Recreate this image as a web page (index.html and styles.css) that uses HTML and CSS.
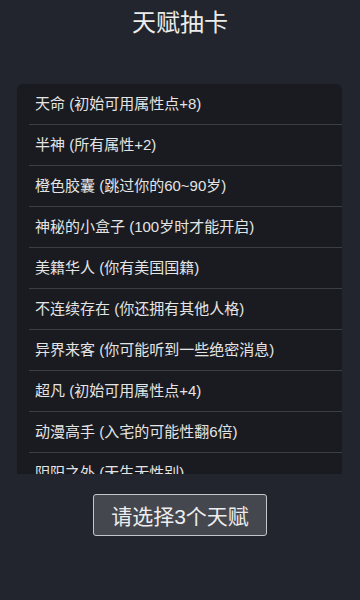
FILE: index.html
```html
<!DOCTYPE html>
<html lang="zh">
<head>
<meta charset="utf-8">
<link rel="stylesheet" href="styles.css">
</head>
<body>
<div class="page">
  <h1 class="title">天赋抽卡</h1>
  <ul class="list">
    <li class="item">天命 (初始可用属性点+8)</li>
    <li class="item">半神 (所有属性+2)</li>
    <li class="item">橙色胶囊 (跳过你的60~90岁)</li>
    <li class="item">神秘的小盒子 (100岁时才能开启)</li>
    <li class="item">美籍华人 (你有美国国籍)</li>
    <li class="item">不连续存在 (你还拥有其他人格)</li>
    <li class="item">异界来客 (你可能听到一些绝密消息)</li>
    <li class="item">超凡 (初始可用属性点+4)</li>
    <li class="item">动漫高手 (入宅的可能性翻6倍)</li>
    <li class="item">阴阳之外 (天生无性别)</li>
  </ul>
  <div class="actions">
    <button class="btn">请选择3个天赋</button>
  </div>
</div>
</body>
</html>
```
FILE: styles.css
```css
html, body {
  margin: 0;
  padding: 0;
  background: #22252d;
}
body {
  width: 360px;
  height: 600px;
  overflow: hidden;
  font-family: "Liberation Sans", "Noto Sans CJK SC", sans-serif;
  color: #e6e6e6;
}
.page {
  display: flex;
  flex-direction: column;
  align-items: center;
}
.title {
  margin: 0;
  padding-top: 6px;
  height: 84px;
  box-sizing: border-box;
  font-size: 24px;
  line-height: 34px;
  font-weight: normal;
  color: #ececec;
  text-align: center;
}
.list {
  list-style: none;
  margin: 0;
  padding: 0;
  width: 325px;
  height: 390px;
  overflow: hidden;
  background: #191b21;
  border-radius: 6px 6px 0 0;
  align-self: flex-start;
  margin-left: 17px;
}
.item {
  height: 41px;
  box-sizing: border-box;
  margin-left: 12px;
  padding-left: 6px;
  border-bottom: 1px solid #3b3e46;
  font-size: 15px;
  line-height: 40px;
  color: #e4e4e4;
  white-space: nowrap;
}
.actions {
  margin-top: 20px;
}
.btn {
  width: 174px;
  height: 42px;
  background: #45474e;
  border: 1.5px solid #c4c6ca;
  border-radius: 3px;
  color: #ededed;
  font-family: "Liberation Sans", "Noto Sans CJK SC", sans-serif;
  font-size: 21px;
  padding: 0;
}
```
